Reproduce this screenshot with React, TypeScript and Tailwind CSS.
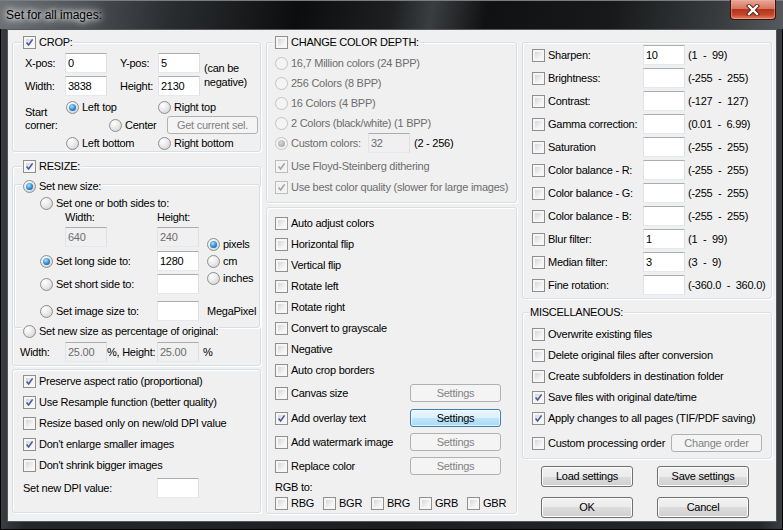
import React from 'react';

type Kid = { children?: React.ReactNode };

const CheckBox: React.FC<{ checked?: boolean; disabled?: boolean }> = ({ checked, disabled }) => (
  <span
    className={`relative flex h-[13px] w-[13px] shrink-0 border p-[2px] ${
      disabled ? 'border-[#bdbdbd] bg-[#f4f4f4]' : 'border-[#8e8f8f] bg-[#f6f6f6]'
    }`}
  >
    <span
      className={`block h-full w-full ${
        disabled ? 'bg-[#f1f1f1]' : 'bg-[linear-gradient(135deg,#d3d6da,#ececee_55%,#fbfbfb)]'
      }`}
    />
    {checked && (
      <svg className="absolute left-[1px] top-[1px]" width="9" height="9" viewBox="0 0 9 9">
        <path
          d="M1.6 4.6 L3.6 6.9 L7.6 1.4"
          fill="none"
          stroke={disabled ? '#a3a3a3' : '#45589a'}
          strokeWidth="1.6"
        />
      </svg>
    )}
  </span>
);

const Radio: React.FC<{ checked?: boolean; disabled?: boolean }> = ({ checked, disabled }) => (
  <span
    className={`flex h-[13px] w-[13px] shrink-0 items-center justify-center rounded-full border ${
      disabled
        ? 'border-[#c4c4c4] bg-[#f4f4f4]'
        : 'border-[#8e8f8f] bg-[radial-gradient(circle_at_35%_30%,#ffffff,#e8e8e8_50%,#c9c9c9)]'
    }`}
  >
    {checked && (
      <span
        className={`h-[7px] w-[7px] rounded-full ${
          disabled
            ? 'bg-[radial-gradient(circle_at_40%_35%,#d8d8d8,#9a9a9a)]'
            : 'bg-[radial-gradient(circle_at_40%_35%,#a9e3ff,#2b8ad3_55%,#0d4a86)]'
        }`}
      />
    )}
  </span>
);

const Field: React.FC<{ value?: string; disabled?: boolean; className?: string }> = ({
  value = '',
  disabled,
  className = '',
}) => (
  <div
    className={`flex h-[20px] w-[42px] shrink-0 items-center border border-[#abadb3] border-b-[#e3e9ef] border-l-[#e2e3ea] border-r-[#dbdfe6] pl-[2px] ${
      disabled ? 'bg-[#f0f0f0] text-[#6d6d6d]' : 'bg-white'
    } ${className}`}
  >
    {value}
  </div>
);

const Btn: React.FC<Kid & { disabled?: boolean; focus?: boolean; className?: string }> = ({
  children,
  disabled,
  focus,
  className = '',
}) => (
  <div
    className={`flex shrink-0 items-center justify-center rounded-[3px] border ${
      disabled
        ? 'border-[#adb2b5] bg-[#f4f4f4] text-[#838383]'
        : focus
        ? 'border-[#3c7fb1] bg-[linear-gradient(#eaf6fd_0%,#d9f0fc_50%,#bee6fd_50%,#a7d9f5_100%)] shadow-[inset_0_0_0_1px_#ffffffaa]'
        : 'border-[#707070] bg-[linear-gradient(#f2f2f2_0%,#ebebeb_50%,#dddddd_50%,#cfcfcf_100%)] shadow-[inset_0_0_0_1px_#fcfcfc]'
    } ${className}`}
  >
    {children}
  </div>
);

const Group: React.FC<Kid & { header?: React.ReactNode; hdr?: string; className?: string }> = ({
  header,
  hdr = '-mt-[7px] ml-[9px]',
  className = '',
  children,
}) => (
  <div
    className={`rounded-[3px] border border-[#d5dfe5] shadow-[inset_1px_1px_0_#ffffff,1px_1px_0_#ffffff] ${className}`}
  >
    {header && (
      <div className={`flex h-[13px] w-fit items-center gap-[3px] bg-[#f0f0f0] px-[1px] ${hdr}`}>{header}</div>
    )}
    {children}
  </div>
);

// checkbox + label on one 13px line
const CB: React.FC<{ label: string; checked?: boolean; disabled?: boolean; className?: string }> = ({
  label,
  checked,
  disabled,
  className = '',
}) => (
  <div className={`flex h-[13px] items-center gap-[3px] whitespace-nowrap ${className}`}>
    <CheckBox checked={checked} disabled={disabled} />
    <span className={disabled ? 'text-[#6d6d6d]' : ''}>{label}</span>
  </div>
);

const RB: React.FC<{ label: string; checked?: boolean; disabled?: boolean; className?: string }> = ({
  label,
  checked,
  disabled,
  className = '',
}) => (
  <div className={`flex h-[13px] items-center gap-[3px] whitespace-nowrap ${className}`}>
    <Radio checked={checked} disabled={disabled} />
    <span className={disabled ? 'text-[#6d6d6d]' : ''}>{label}</span>
  </div>
);

const LeftColumn = () => (
  <div className="flex w-[249px] flex-col pt-[12px]">
    {/* CROP */}
    <Group header={<><CheckBox checked /><span>CROP:</span></>}>
      <div className="pb-[1px] pl-[12px] pt-[4px]">
        <div className="flex">
          <div className="flex flex-col gap-[3px]">
            <div className="flex h-[20px] items-center">
              <span className="w-[40px]">X-pos:</span>
              <Field value="0" />
              <span className="ml-[13px] w-[38px]">Y-pos:</span>
              <Field value="5" />
            </div>
            <div className="flex h-[20px] items-center">
              <span className="w-[40px]">Width:</span>
              <Field value="3838" />
              <span className="ml-[13px] w-[38px]">Height:</span>
              <Field value="2130" />
            </div>
          </div>
          <div className="ml-[4px] pt-[8px] leading-[14px]">
            (can be
            <br />
            negative)
          </div>
        </div>
        <div className="mt-[5px] flex">
          <div className="w-[40px] pt-[5px] leading-[13px]">
            Start
            <br />
            corner:
          </div>
          <div className="flex flex-col">
            <div className="flex h-[13px] items-center">
              <div className="w-[93px] pl-[1px]">
                <RB label="Left top" checked />
              </div>
              <RB label="Right top" />
            </div>
            <div className="mt-[2px] flex h-[18px] items-center">
              <div className="w-[102px] pl-[44px]">
                <RB label="Center" />
              </div>
              <Btn disabled className="h-[18px] w-[91px]">
                Get current sel.
              </Btn>
            </div>
            <div className="mt-[3px] flex h-[13px] items-center">
              <div className="w-[93px] pl-[1px]">
                <RB label="Left bottom" />
              </div>
              <RB label="Right bottom" />
            </div>
          </div>
        </div>
      </div>
    </Group>

    {/* RESIZE */}
    <Group className="mt-[14px]" header={<><CheckBox checked /><span>RESIZE:</span></>}>
      <Group
        className="ml-[1px] mt-[11px]"
        hdr="-mt-[5px] ml-[7px]"
        header={<><Radio checked /><span>Set new size:</span></>}
      >
        <div className="pb-[6px] pl-[25px]">
          <RB className="mt-[4px]" label="Set one or both sides to:" />
          <div className="flex h-[14px] items-center pl-[25px]">
            <span className="w-[92px]">Width:</span>
            <span>Height:</span>
          </div>
          <div className="mt-[3px] flex">
            <div className="flex flex-col">
              <div className="flex h-[20px] items-center pl-[25px]">
                <Field disabled value="640" />
                <Field disabled value="240" className="ml-[50px]" />
              </div>
              <div className="mt-[4px] flex h-[20px] items-center">
                <RB className="w-[117px]" label="Set long side to:" checked />
                <Field value="1280" />
              </div>
              <div className="mt-[3px] flex h-[20px] items-center">
                <RB className="w-[117px]" label="Set short side to:" />
                <Field />
              </div>
            </div>
            <div className="ml-[8px] flex flex-col">
              <RB className="mt-[11px]" label="pixels" checked />
              <RB className="mt-[4px]" label="cm" />
              <RB className="mt-[4px]" label="inches" />
            </div>
          </div>
          <div className="mt-[7px] flex h-[20px] items-center">
            <RB className="w-[117px]" label="Set image size to:" />
            <Field />
            <span className="ml-[8px]">MegaPixel</span>
          </div>
        </div>
      </Group>
      <div className="-mt-[3px] ml-[9px] flex h-[13px] w-fit items-center gap-[3px] bg-[#f0f0f0] px-[1px]">
        <Radio />
        <span>Set new size as percentage of original:</span>
      </div>
      <div className="mt-[4px] flex h-[20px] items-center pl-[7px]">
        <span className="w-[45px]">Width:</span>
        <Field disabled value="25.00" />
        <span className="w-[50px]">%, Height:</span>
        <Field disabled value="25.00" />
        <span className="ml-[4px]">%</span>
      </div>
      <div className="h-[3px]" />
    </Group>

    {/* options */}
    <Group className="mt-[3px]">
      <div className="pb-[14px] pl-[10px] pt-[5px]">
        <CB label="Preserve aspect ratio (proportional)" checked />
        <CB className="mt-[8px]" label="Use Resample function (better quality)" checked />
        <CB className="mt-[8px]" label="Resize based only on new/old DPI value" />
        <CB className="mt-[8px]" label="Don't enlarge smaller images" checked />
        <CB className="mt-[8px]" label="Don't shrink bigger images" />
        <div className="mt-[6px] flex h-[20px] items-center">
          <span className="w-[134px]">Set new DPI value:</span>
          <Field />
        </div>
      </div>
    </Group>
  </div>
);

const MiddleColumn = () => (
  <div className="flex w-[251px] flex-col pt-[12px]">
    <Group hdr="-mt-[7px] ml-[7px]" header={<><CheckBox /><span>CHANGE COLOR DEPTH:</span></>}>
      <div className="pb-[8px] pl-[8px]">
        <RB className="mt-[8px]" label="16,7 Million colors (24 BPP)" disabled />
        <RB className="mt-[7px]" label="256 Colors (8 BPP)" disabled />
        <RB className="mt-[7px]" label="16 Colors (4 BPP)" disabled />
        <RB className="mt-[7px]" label="2 Colors (black/white) (1 BPP)" disabled />
        <div className="mt-[3px] flex h-[20px] items-center">
          <RB className="w-[93px]" label="Custom colors:" checked disabled />
          <Field disabled value="32" />
          <span className="ml-[4px]">(2 - 256)</span>
        </div>
        <CB className="mt-[7px]" label="Use Floyd-Steinberg dithering" checked disabled />
        <CB className="mt-[8px]" label="Use best color quality (slower for large images)" checked disabled />
      </div>
    </Group>

    <Group className="mt-[4px]">
      <div className="pb-[3px] pl-[8px] pt-[9px]">
        <CB label="Auto adjust colors" />
        <CB className="mt-[8px]" label="Horizontal flip" />
        <CB className="mt-[8px]" label="Vertical flip" />
        <CB className="mt-[8px]" label="Rotate left" />
        <CB className="mt-[8px]" label="Rotate right" />
        <CB className="mt-[8px]" label="Convert to grayscale" />
        <CB className="mt-[8px]" label="Negative" />
        <CB className="mt-[8px]" label="Auto crop borders" />
        <div className="mt-[7px] flex h-[18px] items-center">
          <CB className="w-[135px]" label="Canvas size" />
          <Btn disabled className="h-[18px] w-[91px]">Settings</Btn>
        </div>
        <div className="mt-[7px] flex h-[18px] items-center">
          <CB className="w-[135px]" label="Add overlay text" checked />
          <Btn focus className="h-[18px] w-[91px]">Settings</Btn>
        </div>
        <div className="mt-[6px] flex h-[18px] items-center">
          <CB className="w-[135px]" label="Add watermark image" />
          <Btn disabled className="h-[18px] w-[91px]">Settings</Btn>
        </div>
        <div className="mt-[6px] flex h-[18px] items-center">
          <CB className="w-[135px]" label="Replace color" />
          <Btn disabled className="h-[18px] w-[91px]">Settings</Btn>
        </div>
        <div className="mt-[6px] flex h-[13px] items-center">RGB to:</div>
        <div className="mt-[3px] flex">
          {['RBG', 'BGR', 'BRG', 'GRB', 'GBR'].map((s) => (
            <CB key={s} className="w-[48px]" label={s} />
          ))}
        </div>
      </div>
    </Group>
  </div>
);

const adjustments: [string, string, string][] = [
  ['Sharpen:', '10', '(1  -  99)'],
  ['Brightness:', '', '(-255  -  255)'],
  ['Contrast:', '', '(-127  -  127)'],
  ['Gamma correction:', '', '(0.01  -  6.99)'],
  ['Saturation', '', '(-255  -  255)'],
  ['Color balance - R:', '', '(-255  -  255)'],
  ['Color balance - G:', '', '(-255  -  255)'],
  ['Color balance - B:', '', '(-255  -  255)'],
  ['Blur filter:', '1', '(1  -  99)'],
  ['Median filter:', '3', '(3  -  9)'],
  ['Fine rotation:', '', '(-360.0  -  360.0)'],
];

const RightColumn = () => (
  <div className="flex w-[250px] flex-col pt-[12px]">
    <Group>
      <div className="flex flex-col gap-[3px] pb-[3px] pl-[9px] pt-[2px]">
        {adjustments.map(([label, value, range]) => (
          <div key={label} className="flex h-[20px] items-center">
            <CB className="w-[111px]" label={label} />
            <Field value={value} />
            <span className="ml-[3px] whitespace-pre">{range}</span>
          </div>
        ))}
      </div>
    </Group>

    <Group className="mt-[13px]" hdr="-mt-[7px] ml-[6px]" header={<span>MISCELLANEOUS:</span>}>
      <div className="pb-[6px] pl-[9px]">
        <CB className="mt-[9px]" label="Overwrite existing files" />
        <CB className="mt-[8px]" label="Delete original files after conversion" />
        <CB className="mt-[8px]" label="Create subfolders in destination folder" />
        <CB className="mt-[8px]" label="Save files with original date/time" checked />
        <CB className="mt-[8px]" label="Apply changes to all pages (TIF/PDF saving)" checked />
        <div className="mt-[9px] flex h-[18px] items-center">
          <CB className="w-[139px]" label="Custom processing order" />
          <Btn disabled className="h-[18px] w-[91px]">Change order</Btn>
        </div>
      </div>
    </Group>

    <div className="mt-[7px] grid grid-cols-[92px_92px] gap-x-[24px] gap-y-[10px] pl-[19px]">
      <Btn className="h-[21px]">Load settings</Btn>
      <Btn className="h-[21px]">Save settings</Btn>
      <Btn className="h-[21px]">OK</Btn>
      <Btn className="h-[21px]">Cancel</Btn>
    </div>
  </div>
);

export default function App() {
  return (
    <div className="flex h-[530px] w-[783px] flex-col overflow-hidden bg-[linear-gradient(90deg,#3b3e42,#24272a_3%,#1c1e20_50%,#24272a_97%,#3b3e42)] font-['Liberation_Sans',Arial,sans-serif] text-[11px] tracking-[-0.25px] text-black shadow-[inset_0_0_0_1px_#000000]">
      {/* title bar */}
      <div className="flex h-[29px] shrink-0 items-start justify-between bg-[linear-gradient(100deg,#6e7276_0%,#4e5256_10%,#2a2d30_22%,#0c0d0e_38%,#1d1f21_50%,#3b3e41_55%,#101112_62%,#17191a_78%,#3a3d40_92%,#56595d_100%)] shadow-[inset_0_1px_0_#7a7d80]">
        <span className="ml-[6px] mt-[6px] text-[12px] tracking-normal [text-shadow:0_0_5px_#ffffff,0_0_9px_#ffffff,0_0_14px_#ffffffcc]">
          Set for all images:
        </span>
        <div className="mr-[7px] flex h-[20px] w-[46px] items-center justify-center rounded-b-[4px] border border-t-0 border-[#40100a] bg-[linear-gradient(#e7a899_0%,#d7765f_45%,#b5341b_50%,#c4472b_78%,#e2876a_100%)] shadow-[inset_0_0_0_1px_#f0b0a080]">
          <svg width="14" height="12" viewBox="0 0 14 12">
            <path d="M3 2 L11 10 M11 2 L3 10" stroke="#5a1a10" strokeWidth="4.2" strokeLinecap="square" />
            <path d="M3 2 L11 10 M11 2 L3 10" stroke="#ffffff" strokeWidth="2.4" strokeLinecap="square" />
          </svg>
        </div>
      </div>

      {/* client area */}
      <div className="ml-[7px] flex h-[493px] w-[770px] shrink-0 items-start gap-[5px] border border-[#55595d] bg-[#f0f0f0] pl-[4px]">
        <LeftColumn />
        <MiddleColumn />
        <RightColumn />
      </div>
    </div>
  );
}
